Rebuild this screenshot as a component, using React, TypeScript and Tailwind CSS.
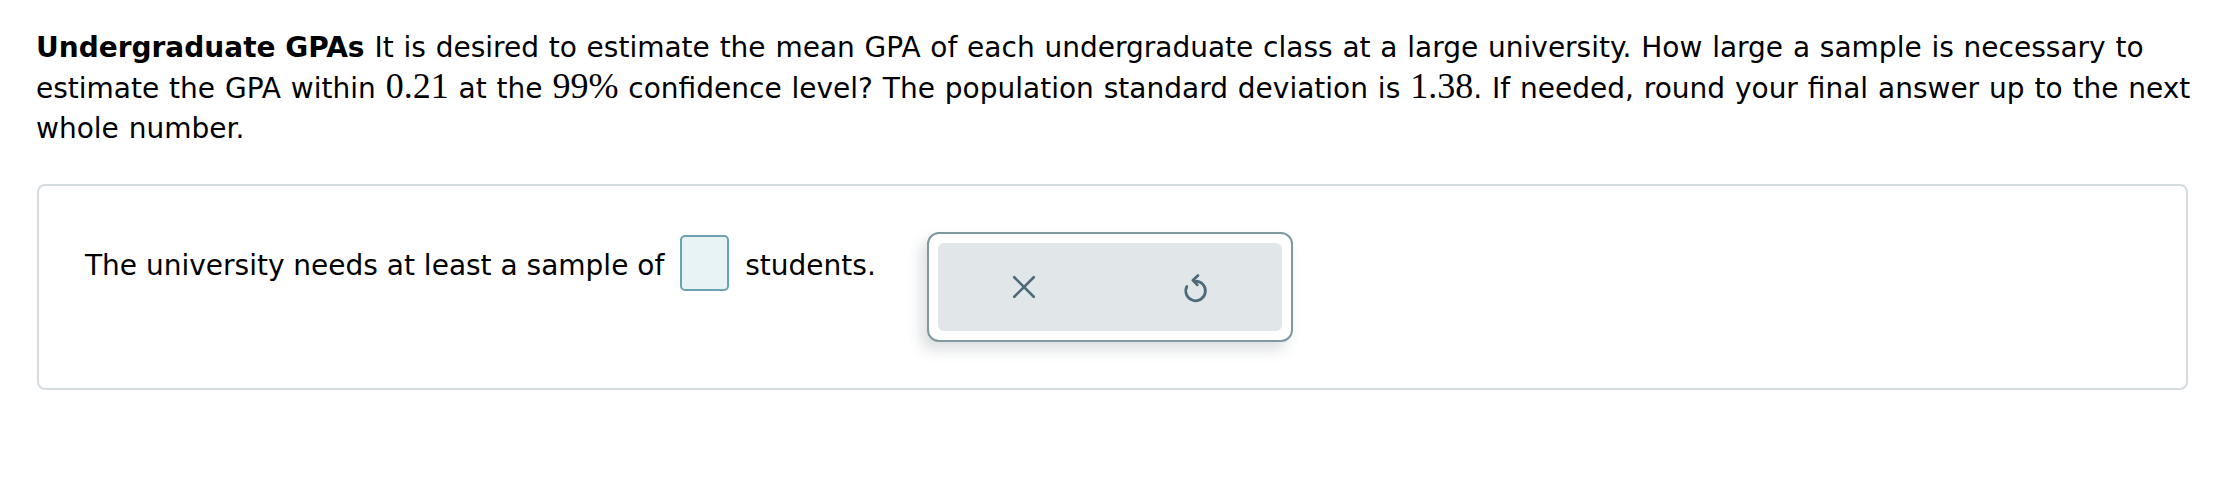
import React from "react";

function Num({ children }: { children: React.ReactNode }) {
  return (
    <span className="font-['Liberation_Serif','Times_New_Roman',serif] text-[36px] leading-[36px]">
      {children}
    </span>
  );
}

function XIcon() {
  return (
    <svg width="26" height="26" viewBox="0 0 24 24" fill="none" stroke="#4b6b78" strokeWidth="2.4" strokeLinecap="round">
      <path d="M3 3 L21 21" />
      <path d="M21 3 L3 21" />
    </svg>
  );
}

function UndoIcon() {
  return (
    <svg width="32" height="34" viewBox="0 0 24 26" fill="none" stroke="#4b6b78" strokeWidth="2.1" strokeLinecap="round" strokeLinejoin="round">
      <path d="M11.5 8.5 A7.5 7.5 0 1 1 5 12.6" />
      <path d="M13.5 4.2 L9.6 7.9 L13 11.4" />
    </svg>
  );
}

export default function App() {
  return (
    <div className="w-[2228px] min-h-[486px] bg-white font-['DejaVu_Sans',Verdana,sans-serif] text-black">
      <div className="pl-[36px] pr-[20px] pt-[28px]">
        <p className="text-[28px] leading-[40px] [word-spacing:1px]">
          <span className="font-bold [word-spacing:0px]">Undergraduate GPAs</span>{" "}
          <span className="[word-spacing:0.9px]">
            It is desired to estimate the mean GPA of each undergraduate class at a large university. How large a
            sample is necessary to
          </span>{" "}
          estimate the GPA within <Num>0.21</Num> at the <Num>99%</Num> confidence level? The population standard
          deviation is <Num>1.38</Num>. If needed, round your final answer up to the next whole number.
        </p>
        <div className="mt-[35px] ml-[1px] w-[2151px] rounded-[8px] border-2 border-[#d5dce0] px-[46px] py-[46px]">
          <div className="flex items-start">
            <div className="mt-[3px] flex h-[56px] items-center text-[28px]">
              <span className="mt-[6px]">The university needs at least a sample of</span>
              <span className="mx-[16px] h-[56px] w-[49px] rounded-[5px] border-2 border-[#6aa3ad] bg-[#e8f3f6]" />
              <span className="mt-[6px]">students.</span>
            </div>
            <div className="ml-[51px] w-[366px] rounded-[12px] border-2 border-[#7f98a2] bg-white p-[9px] shadow-[-6px_8px_14px_rgba(60,80,90,0.18)]">
              <div className="flex h-[88px] items-center rounded-[6px] bg-[#e1e6e9]">
                <div className="flex flex-1 items-center justify-center">
                  <XIcon />
                </div>
                <div className="flex flex-1 items-center justify-center">
                  <UndoIcon />
                </div>
              </div>
            </div>
          </div>
        </div>
      </div>
    </div>
  );
}
